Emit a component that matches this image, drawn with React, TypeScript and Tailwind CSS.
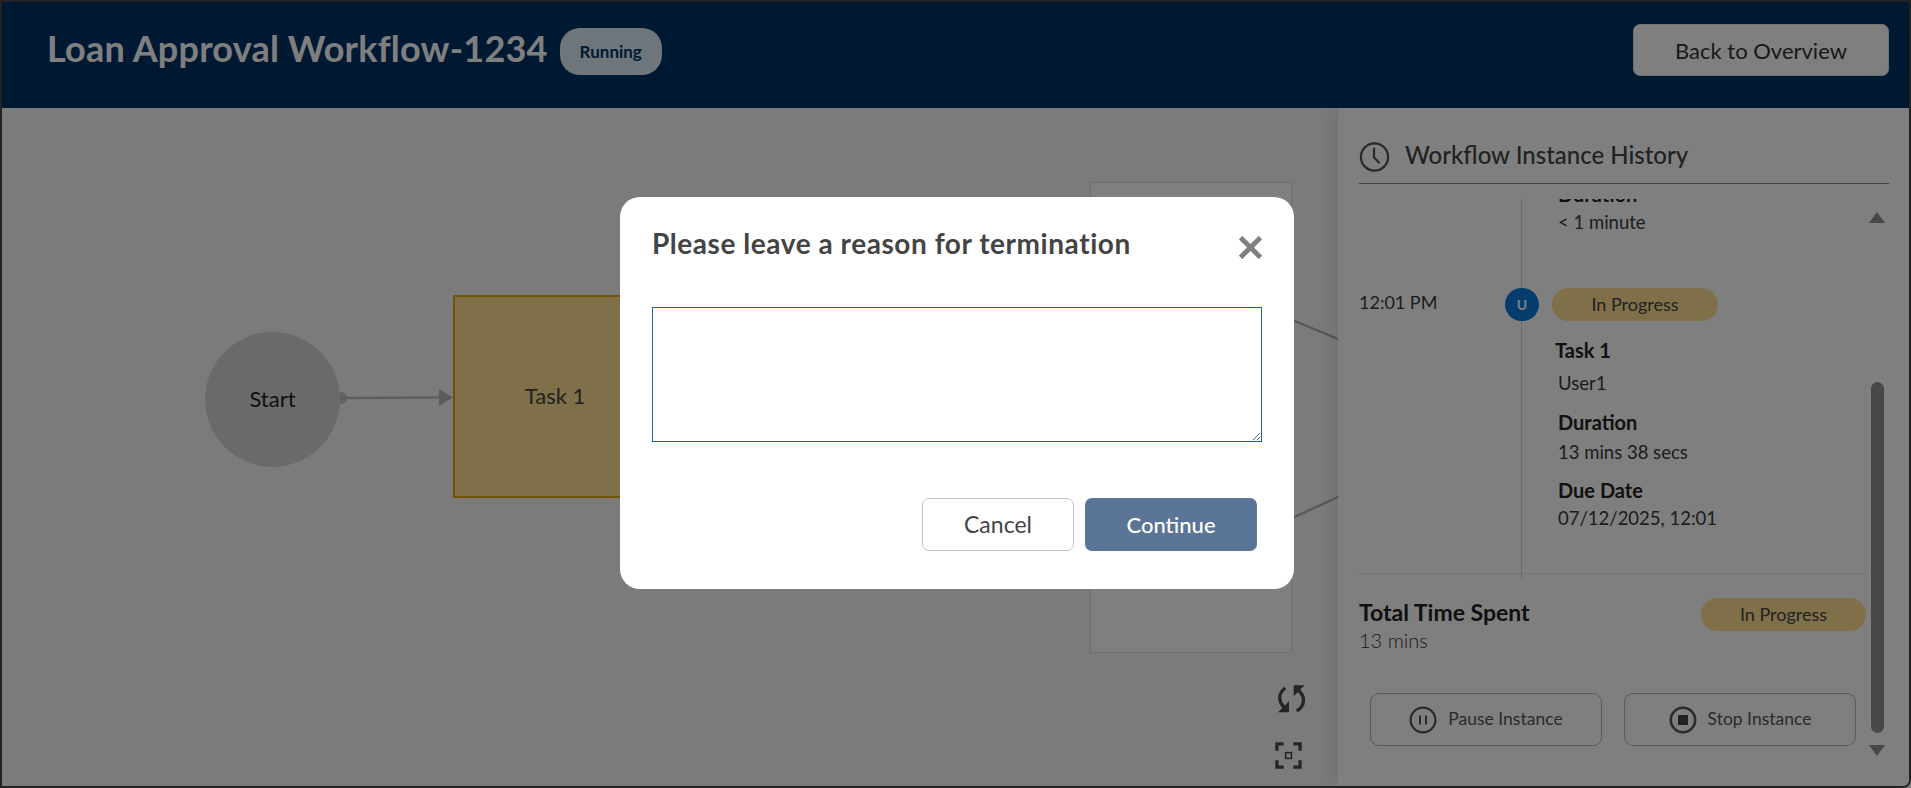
import React from "react";

const pill = "flex items-center justify-center rounded-full bg-[#ffe094] text-[18px] text-[#444]";
const label = "text-[20px] leading-[24px] font-bold text-[#222]";
const value = "text-[18.5px] leading-[24px] text-[#3a3a3a]";

function ClockIcon() {
  return (
    <svg width="31" height="30" viewBox="0 0 31 30" fill="none" stroke="#555" strokeWidth="2.2" strokeLinecap="round">
      <circle cx="15.5" cy="15" r="13.6" />
      <path d="M15 6.5 V15.5 L20 20.5" />
    </svg>
  );
}

function RefreshIcon() {
  return (
    <svg width="30" height="30" viewBox="9 15 90 90" fill="none">
      <path d="M40 24 C20 38 16 62 38 84" stroke="#4a4a4a" strokeWidth="10" />
      <path d="M74 93 C100 78 102 48 76 29" stroke="#4a4a4a" strokeWidth="10" />
      <polygon points="18,97 51,97 51,64" fill="#4a4a4a" />
      <polygon points="98,16 65,16 65,49" fill="#4a4a4a" />
    </svg>
  );
}

function FocusIcon() {
  return (
    <svg width="27" height="27" viewBox="0 0 28 28" fill="none" stroke="#4a4a4a" strokeWidth="3.4">
      <path d="M2 9 V2 H9 M19 2 H26 V9 M26 19 V26 H19 M9 26 H2 V19" />
      <rect x="11" y="11" width="6" height="6" strokeWidth="1.6" />
    </svg>
  );
}

function PauseIcon() {
  return (
    <svg width="28" height="28" viewBox="0 0 28 28" fill="none" stroke="#555">
      <circle cx="14" cy="14" r="12.4" strokeWidth="2.2" />
      <path d="M11 9.5 V18.5 M17 9.5 V18.5" strokeWidth="2" />
    </svg>
  );
}

function StopIcon() {
  return (
    <svg width="28" height="28" viewBox="0 0 28 28" fill="none">
      <circle cx="14" cy="14" r="12.2" stroke="#555" strokeWidth="2.6" />
      <rect x="9" y="9" width="10" height="10" fill="#444" />
    </svg>
  );
}

function Canvas() {
  return (
    <div className="relative flex-1 bg-[#f6f6f6] text-[#333]">
      <svg className="absolute inset-0" width="1336" height="680" fill="none">
        <circle cx="339" cy="290" r="6" fill="#c4c4c4" />
        <path d="M339 290 L440 289.5" stroke="#bdbdbd" strokeWidth="2.6" />
        <polygon points="437,281 451,289.5 437,298" fill="#b8b8b8" />
        <path d="M1288 211 L1336 231" stroke="#b0b0b0" strokeWidth="2.4" />
        <path d="M1288 411 L1336 389" stroke="#b0b0b0" strokeWidth="2.4" />
      </svg>
      <div className="absolute left-[203px] top-[224px] flex h-[135px] w-[135px] items-center justify-center rounded-full bg-[#d5d5d5] pb-[3px] text-[22px] text-[#222]">
        Start
      </div>
      <div className="absolute left-[451px] top-[187px] flex h-[203px] w-[208px] items-center justify-center border-2 border-[#e0a800] bg-[#ffe094] pb-[3px] pr-[4px] text-[22px] text-[#444]">
        Task 1
      </div>
      <div className="absolute left-[1088px] top-[74px] h-[471px] w-[202px] border border-[#dedede] bg-white" />
      <div className="absolute right-[33px] top-[577px] flex flex-col items-start gap-[27px]">
        <RefreshIcon />
        <FocusIcon />
      </div>
    </div>
  );
}

function HistoryPanel() {
  return (
    <aside className="relative flex w-[571px] shrink-0 flex-col bg-white pl-[21px] shadow-[-10px_0_14px_rgba(0,0,0,0.06)]">
      <div className="mr-[20px] flex h-[76px] items-end gap-[15px] border-b border-[#8a8a8a] pb-[11px]">
        <ClockIcon />
        <span className="pb-[3px] text-[24px] leading-[28px] font-medium text-[#444]">Workflow Instance History</span>
      </div>
      <div className="mt-[15px] flex h-[381px] overflow-hidden">
        <div className="w-[162px] shrink-0 pt-[91px] text-[18px] leading-[24px] text-[#3a3a3a]">12:01 PM</div>
        <div className="relative flex-1 border-l border-[#d8d8d8] pl-[36px]">
          <div className="-mt-[17px]">
            <div className={label}>Duration</div>
            <div className={`mt-[4px] ${value}`}>&lt; 1 minute</div>
          </div>
          <div className={`-ml-[6px] mt-[54px] h-[33px] w-[166px] ${pill}`}>In Progress</div>
          <div className={`-ml-[3px] mt-[17px] ${label}`}>Task 1</div>
          <div className={`mt-[9px] ${value}`}>User1</div>
          <div className={`mt-[15px] ${label}`}>Duration</div>
          <div className={`mt-[6px] ${value}`}>13 mins 38 secs</div>
          <div className={`mt-[14px] ${label}`}>Due Date</div>
          <div className={`mt-[4px] ${value}`}>07/12/2025, 12:01</div>
          <div className="absolute -left-[17px] top-[89px] flex h-[33px] w-[34px] items-center justify-center rounded-full bg-[#0a7adc] text-[14px] font-bold text-white">
            U
          </div>
        </div>
      </div>
      <div className="relative mr-[43px] -mt-[7px] flex justify-between border-t border-[#e6e6e6] pt-[24px]">
        <div>
          <div className="text-[23px] leading-[28px] font-bold text-[#222]">Total Time Spent</div>
          <div className="text-[20px] leading-[28px] font-light text-[#333]">13 mins</div>
        </div>
        <div className={`h-[33px] w-[165px] ${pill}`}>In Progress</div>
      </div>
      <div className="ml-[11px] mt-[39px] flex gap-[22px]">
        <button className="flex h-[53px] w-[232px] items-center justify-center gap-[11px] rounded-[9px] border border-[#b5b5b5] text-[17.5px] text-[#555]">
          <PauseIcon /> Pause Instance
        </button>
        <button className="flex h-[53px] w-[232px] items-center justify-center gap-[11px] rounded-[9px] border border-[#b5b5b5] text-[17.5px] text-[#555]">
          <StopIcon /> Stop Instance
        </button>
      </div>
      <div className="absolute right-[24px] top-[104px] h-0 w-0 border-x-[8px] border-b-[11px] border-x-transparent border-b-[#909090]" />
      <div className="absolute right-[25px] top-[274px] h-[351px] w-[13px] rounded-full bg-[#909090]" />
      <div className="absolute right-[24px] top-[637px] h-0 w-0 border-x-[8px] border-t-[11px] border-x-transparent border-t-[#909090]" />
    </aside>
  );
}

function Modal() {
  return (
    <div className="fixed inset-0 flex items-center justify-center bg-black/50 pb-[3px] pl-[3px]">
      <div className="flex h-[392px] w-[674px] flex-col rounded-[20px] bg-white px-[32px] pt-[30px]">
        <div className="flex h-[34px] items-start justify-between">
          <h2 className="mt-[3px] text-[28px] leading-[26px] font-bold tracking-[0.55px] text-[#444]">Please leave a reason for termination</h2>
          <svg className="mt-[9px]" width="23" height="23" viewBox="0 0 22 22" stroke="#7f7f7f" strokeWidth="4.6">
            <path d="M1.5 1.5 L20.5 20.5 M20.5 1.5 L1.5 20.5" />
          </svg>
        </div>
        <textarea className="mt-[46px] h-[135px] w-[610px] resize border border-[#1a5fa8] outline-none" />
        <div className="mr-[5px] mt-[56px] flex justify-end gap-[11px]">
          <button className="h-[53px] w-[152px] rounded-[7px] border border-[#c4c4c4] text-[23px] text-[#444]">Cancel</button>
          <button className="h-[53px] w-[172px] rounded-[7px] bg-[#5a7595] text-[22px] font-medium text-white">Continue</button>
        </div>
      </div>
    </div>
  );
}

export default function App() {
  return (
    <div className="relative flex h-[788px] w-full flex-col overflow-hidden rounded-br-[8px] border-2 border-[#444] font-['Lato','Liberation_Sans',sans-serif]">
      <header className="flex h-[106px] shrink-0 items-start justify-between bg-[#003366] pl-[45px] pr-[20px]">
        <div className="mt-[26px] flex items-center gap-[12px]">
          <h1 className="-mt-[8px] text-[36px] leading-[44px] font-bold tracking-[0.22px] text-white">Loan Approval Workflow-1234</h1>
          <span className="flex h-[47px] w-[102px] items-center justify-center rounded-[20px] bg-[#dcecf8] text-[17px] font-bold text-[#003366]">
            Running
          </span>
        </div>
        <button className="mt-[22px] h-[52px] w-[256px] rounded-[7px] border border-[#e0e0e0] bg-white text-[22px] text-[#333]">Back to Overview</button>
      </header>
      <div className="flex flex-1 overflow-hidden">
        <Canvas />
        <HistoryPanel />
      </div>
      <Modal />
    </div>
  );
}
